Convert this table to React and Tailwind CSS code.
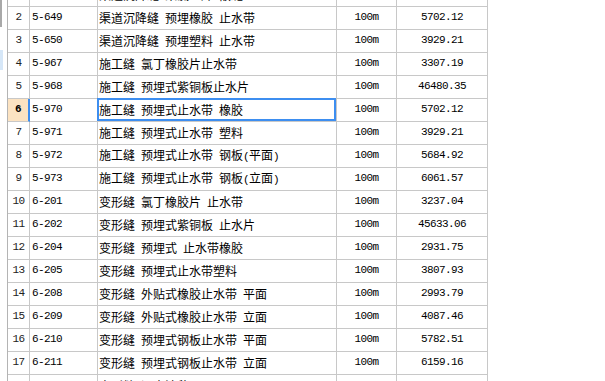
import { Fragment } from 'react'

// quota rows: [row no, code, name, unit, price]
const rows = [
  [1, '5-648', '渠道沉降缝 聚氯乙烯 嵌缝', '100m', '1862.40'],
  [2, '5-649', '渠道沉降缝 预埋橡胶 止水带', '100m', '5702.12'],
  [3, '5-650', '渠道沉降缝 预埋塑料 止水带', '100m', '3929.21'],
  [4, '5-967', '施工缝 氯丁橡胶片止水带', '100m', '3307.19'],
  [5, '5-968', '施工缝 预埋式紫铜板止水片', '100m', '46480.35'],
  [6, '5-970', '施工缝 预埋式止水带 橡胶', '100m', '5702.12'],
  [7, '5-971', '施工缝 预埋式止水带 塑料', '100m', '3929.21'],
  [8, '5-972', '施工缝 预埋式止水带 钢板(平面)', '100m', '5684.92'],
  [9, '5-973', '施工缝 预埋式止水带 钢板(立面)', '100m', '6061.57'],
  [10, '6-201', '变形缝 氯丁橡胶片 止水带', '100m', '3237.04'],
  [11, '6-202', '变形缝 预埋式紫铜板 止水片', '100m', '45633.06'],
  [12, '6-204', '变形缝 预埋式 止水带橡胶', '100m', '2931.75'],
  [13, '6-205', '变形缝 预埋式止水带塑料', '100m', '3807.93'],
  [14, '6-208', '变形缝 外贴式橡胶止水带 平面', '100m', '2993.79'],
  [15, '6-209', '变形缝 外贴式橡胶止水带 立面', '100m', '4087.46'],
  [16, '6-210', '变形缝 预埋式钢板止水带 平面', '100m', '5782.51'],
  [17, '6-211', '变形缝 预埋式钢板止水带 立面', '100m', '6159.16'],
  [18, '6-212', '变形缝 沥青油毡', '100m', '1251.33'],
]

const SELECTED = 6

const mono = "font-['Liberation_Mono','DejaVu_Sans_Mono',monospace] text-[11px] tracking-[-0.6px] pb-[2px]"
const cjk = "font-['Noto_Sans_CJK_SC','Noto_Sans',sans-serif] text-[12px]"

// mix cjk text with half-width latin bits so digits and brackets stay narrow
const Name = ({ text }) => {
  const parts = text.split(/([\x21-\x7e]+)/)
  return (
    <span className="whitespace-pre">
      {parts.map((p, i) =>
        /^[\x21-\x7e]+$/.test(p) ? (
          <span key={i} className="font-['Liberation_Mono','DejaVu_Sans_Mono',monospace] text-[11px] tracking-[-0.6px]">{p}</span>
        ) : (
          <Fragment key={i}>{p.replace(/ /g, '\u2002')}</Fragment>
        )
      )}
    </span>
  )
}

function Row({ no, code, name, unit, price }) {
  const sel = no === SELECTED
  return (
    <div className="flex h-[23px]">
      <div
        className={`w-[22px] shrink-0 flex items-center justify-center border-b border-[#c8c8c8] ${
          sel
            ? 'bg-[#fce3c2] border-r-2 border-r-[#3d8ef0] font-bold text-black'
            : 'border-r border-r-[#c8c8c8] text-[#222]'
        } ${mono}`}
      >
        {no}
      </div>
      <div className={`w-[68px] shrink-0 flex items-center pl-[2px] border-r border-b border-[#c8c8c8] text-black ${mono}`}>
        {code}
      </div>
      <div className={`relative w-[239px] shrink-0 flex items-center pl-[1px] border-r border-b border-[#c8c8c8] text-black ${cjk}`}>
        <Name text={name} />
        {sel && <div className="absolute -left-[1px] -top-[1px] right-0 bottom-0 border-2 border-[#3d8ef0]" />}
      </div>
      <div className={`w-[60px] shrink-0 flex items-center justify-center border-r border-b border-[#c8c8c8] text-black ${mono}`}>
        {unit}
      </div>
      <div className={`w-[91px] shrink-0 flex items-center justify-center border-r border-b border-[#c8c8c8] text-black ${mono}`}>
        {price}
      </div>
    </div>
  )
}

export default function App() {
  return (
    <div className="w-[605px] h-[381px] overflow-hidden bg-white flex">
      {/* edge of the neighbouring panel */}
      <div className="w-[7px] shrink-0 flex flex-col">
        <div className="w-[2px] h-[27px] bg-[#a9a9a9]" />
        <div className="w-[2px] h-[23px]" />
        <div className="w-[3px] h-[20px] bg-[#d6e7f8]" />
      </div>
      <div className="border-l border-[#b4b4b4] h-[381px] overflow-hidden">
        <div className="-mt-[16px] flex flex-col">
          {rows.map(([no, code, name, unit, price]) => (
            <Row key={no} no={no} code={code} name={name} unit={unit} price={price} />
          ))}
        </div>
      </div>
    </div>
  )
}
